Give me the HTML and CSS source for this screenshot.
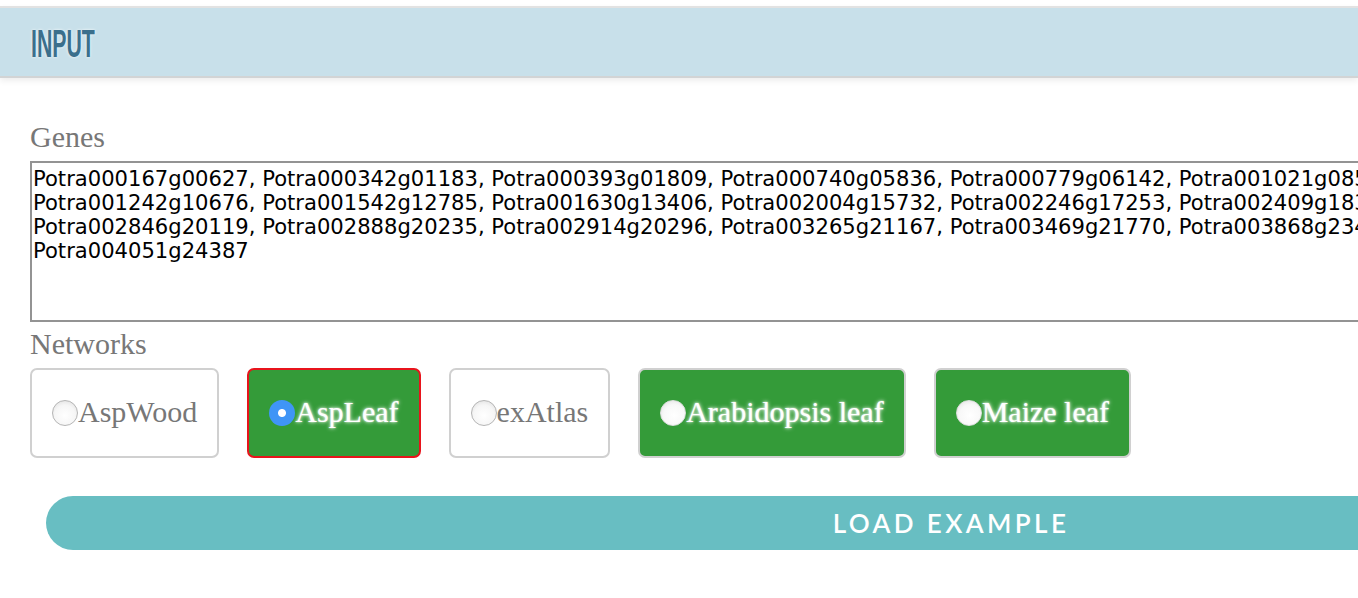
FILE: index.html
```html
<!DOCTYPE html>
<html lang="en">
<head>
<meta charset="utf-8">
<title>Input</title>
<link rel="stylesheet" href="styles.css">
</head>
<body>
<header class="panel-head">
  <h2 class="panel-title">INPUT</h2>
</header>
<section class="panel-body">
  <label class="field-label" for="genes">Genes</label>
  <textarea id="genes" class="genes" spellcheck="false">Potra000167g00627, Potra000342g01183, Potra000393g01809, Potra000740g05836, Potra000779g06142, Potra001021g08535, Potra001242g10676, Potra001542g12785, Potra001630g13406, Potra002004g15732, Potra002246g17253, Potra002409g18356, Potra002846g20119, Potra002888g20235, Potra002914g20296, Potra003265g21167, Potra003469g21770, Potra003868g23491, Potra004051g24387</textarea>
  <div class="field-label">Networks</div>
  <div class="nets">
    <label class="net"><input type="radio" name="net" class="radio"><span>AspWood</span></label>
    <label class="net net--green net--selected"><input type="radio" name="net" class="radio" checked><span>AspLeaf</span></label>
    <label class="net"><input type="radio" name="net" class="radio"><span>exAtlas</span></label>
    <label class="net net--green"><input type="radio" name="net" class="radio"><span>Arabidopsis leaf</span></label>
    <label class="net net--green"><input type="radio" name="net" class="radio"><span>Maize leaf</span></label>
  </div>
  <button class="load" type="button">LOAD EXAMPLE</button>
</section>
</body>
</html>
```
FILE: styles.css
```css
html, body {
  margin: 0;
  padding: 0;
  background: #fff;
  overflow: hidden;
}

body {
  font-family: "Liberation Serif", "Times New Roman", serif;
}

.panel-head {
  margin-top: 6px;
  height: 68px;
  background: #c8e0ea;
  border-top: 2px solid #e2e2e2;
  border-bottom: 2px solid #d2d4d5;
  box-shadow: 0 3px 6px rgba(0, 0, 0, 0.07);
  padding-left: 30px;
  display: flex;
  align-items: center;
}

.panel-title {
  margin: 0;
  font-family: "Liberation Sans", Arial, sans-serif;
  font-weight: 700;
  font-size: 38px;
  line-height: 40px;
  color: #3b6f8c;
  text-shadow: 0 0 4px rgba(255, 255, 255, 0.9);
  transform: scaleX(0.56);
  transform-origin: left center;
  position: relative;
  top: 2px;
  left: 1px;
}

.panel-body {
  padding: 42px 0 0 30px;
}

.field-label {
  display: block;
  font-size: 30px;
  line-height: 34px;
  color: #777;
  margin-bottom: 7px;
}

.genes {
  display: block;
  box-sizing: border-box;
  width: 1500px;
  height: 161px;
  margin: 0 0 5px 0;
  padding: 4px 1px;
  border: 2px solid #939393;
  font-family: "DejaVu Sans", Verdana, sans-serif;
  font-size: 21.1px;
  line-height: 24px;
  color: #000;
  resize: none;
  overflow: hidden;
  outline: none;
}

.nets {
  display: flex;
  gap: 28px;
}

.net {
  box-sizing: border-box;
  height: 90px;
  padding: 0 20px;
  display: flex;
  align-items: center;
  border: 2px solid #d0d0d0;
  border-radius: 7px;
  background: #fff;
  color: #777;
  font-size: 30px;
  white-space: nowrap;
}

.net span {
  position: relative;
  top: -1px;
}

.net--green {
  background: #349b39;
  color: #fff;
  text-shadow: 0 0 4px #fff, 0 0 2px rgba(255, 255, 255, 0.8);
}

.net--selected {
  border-color: #e8141c;
}

.radio {
  appearance: none;
  -webkit-appearance: none;
  box-sizing: border-box;
  width: 26px;
  height: 26px;
  margin: 0;
  border-radius: 50%;
  border: 1px solid #b5b5b5;
  background: radial-gradient(circle at 50% 60%, #ffffff 0%, #f6f6f6 55%, #d8d8d8 100%);
  flex: none;
}

.net--green .radio {
  border-color: #e0e0e0;
  background: radial-gradient(circle at 55% 60%, #ffffff 0%, #f8f8f8 55%, #dcdcdc 100%);
}

.radio:checked {
  border: none;
  background: radial-gradient(circle, #ffffff 0, #ffffff 3.5px, #3f95f6 4.5px);
}

.load {
  display: flex;
  align-items: center;
  justify-content: center;
  width: 1810px;
  height: 54px;
  margin: 38px 0 0 16px;
  padding: 0;
  border: none;
  border-radius: 27px;
  background: #68bec2;
  color: #fff;
  font-family: Lato, "Open Sans", sans-serif;
  font-weight: 600;
  font-size: 26px;
  letter-spacing: 3.4px;
}
```
